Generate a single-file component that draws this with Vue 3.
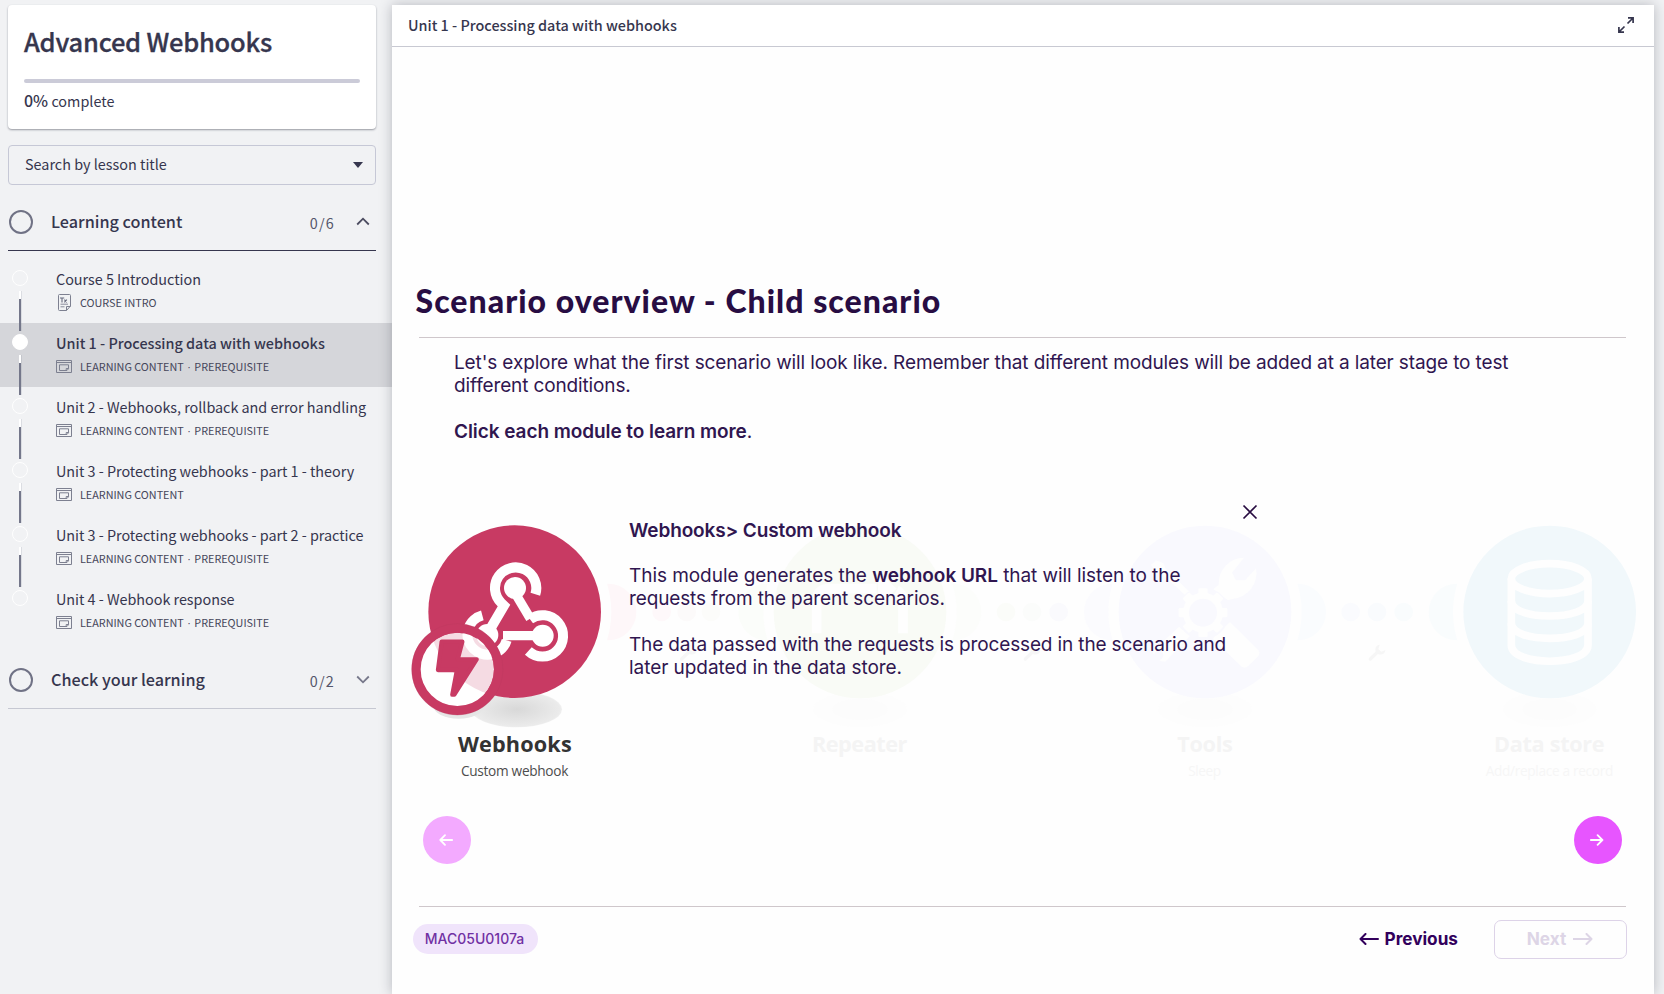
<script setup>
const lessons = [
  { title: 'Course 5 Introduction', kind: 'COURSE INTRO', doc: true },
  { title: 'Unit 1 - Processing data with webhooks', kind: 'LEARNING CONTENT', pre: true, active: true },
  { title: 'Unit 2 - Webhooks, rollback and error handling', kind: 'LEARNING CONTENT', pre: true },
  { title: 'Unit 3 - Protecting webhooks - part 1 - theory', kind: 'LEARNING CONTENT' },
  { title: 'Unit 3 - Protecting webhooks - part 2 - practice', kind: 'LEARNING CONTENT', pre: true },
  { title: 'Unit 4 - Webhook response', kind: 'LEARNING CONTENT', pre: true }
]
const dots = [
  { x: 785, c: '#fef8fa' }, { x: 860, c: '#fcfafa' }, { x: 933, c: '#fcfcfa' },
  { x: 1818, c: '#fbfcf9' }, { x: 1896, c: '#fbfcfb' }, { x: 1976, c: '#fafafd' },
  { x: 2852, c: '#fafbfe' }, { x: 2931, c: '#f9fbfd' }, { x: 3011, c: '#f9fcfd' }
]
const wrenches = [865, 1896, 2931]
const teeth = [0, 45, 90, 135, 180, 225, 270, 315]
</script>

<template>
  <div class="app">
    <aside class="side">
      <section class="card">
        <h2>Advanced Webhooks</h2>
        <div class="bar"></div>
        <p class="done"><b>0%</b> complete</p>
      </section>
      <div class="search">
        <span>Search by lesson title</span>
        <svg width="10" height="6" viewBox="0 0 10 6"><path d="M0 0H10L5 6Z" fill="#36364e" /></svg>
      </div>

      <div class="group open">
        <i class="ring"></i><strong>Learning content</strong><em>0/6</em>
        <svg width="14" height="9" viewBox="0 0 14 9"><path d="M1.2 7.5L7 1.7L12.8 7.5" fill="none" stroke="#4c4c60" stroke-width="1.8" /></svg>
      </div>
      <ul class="lessons">
        <li v-for="(l, i) in lessons" :key="l.title" :class="{ active: l.active }">
          <div class="track"><i class="dot"></i><i v-if="i < 5" class="line"></i></div>
          <div class="text">
            <div class="name">{{ l.title }}</div>
            <div class="meta">
              <svg v-if="l.doc" width="16" height="17" viewBox="0 0 16 17" fill="none" stroke="#7d8090">
                <path d="M2.500 1.500Q2.500 .5 3.500 .5H13.500Q14.500 .5 14.500 1.500V12L10.500 16.500H3.500Q2.500 16.500 2.500 15.500Z M14.500 12.500H10.500V16.500" />
                <path d="M4 4H8.200M6 4V8.400M8.400 5.600L10.800 8.300M10.800 5.600L8.400 8.300" stroke="#666a7e" stroke-width="1.100" />
                <path d="M4.500 10.200H12M4.500 12.800H8.500" stroke-width=".9" />
              </svg>
              <svg v-else width="16" height="13" viewBox="0 0 16 13" fill="none" stroke="#7d8090">
                <path d="M.5 .5H15.500V12.500H.5Z M.5 2.500H15.500" />
                <path d="M3.500 4.800H12.500V8.800L11 10.500H3.500Z M12.500 8.500H10.200V10.500" />
              </svg>
              <span>{{ l.kind }}<template v-if="l.pre"><b class="mid">·</b>PREREQUISITE</template></span>
            </div>
          </div>
        </li>
      </ul>
      <div class="group">
        <i class="ring"></i><strong>Check your learning</strong><em>0/2</em>
        <svg width="14" height="9" viewBox="0 0 14 9"><path d="M1.2 1.5L7 7.3L12.8 1.5" fill="none" stroke="#77788a" stroke-width="1.8" /></svg>
      </div>
    </aside>

    <main class="panel">
      <header class="head">
        <span>Unit 1 - Processing data with webhooks</span>
        <svg width="18" height="18" viewBox="0 0 18 18" fill="none" stroke="#36364e" stroke-width="1.7">
          <path d="M11 1.900H16.100V7M16 2L10.500 7.500M1.900 11V16.100H7M2 16L7.500 10.500" />
        </svg>
      </header>
      <div class="stage">
        <h1>Scenario overview - Child scenario</h1>
        <hr>
        <div class="intro">
          <p class="l1">Let's explore what the first scenario will look like. Remember that different modules will be added at a later stage to test</p>
          <p class="l2">different conditions.</p>
          <p class="l3"><b>Click each module to learn more</b>.</p>
        </div>

        <div class="scene">
          <svg class="flow" width="1254" height="300" viewBox="0 0 3762 900">
            <defs>
              <radialGradient id="shade"><stop offset="0" stop-color="#d8d8d8" /><stop offset=".95" stop-color="#ebebeb" /><stop offset="1" stop-color="#f0f0f0" /></radialGradient>
              <g id="wrench">
                <path d="M-20 19L4 -4" stroke="#f6f6f6" stroke-width="10" stroke-linecap="round" />
                <path d="M8 -24A15 15 0 1 0 25 -8L13 -3L4 -10Z" fill="#f6f6f6" />
              </g>
            </defs>

            <!-- connectors -->
            <circle cx="624" cy="336" r="85" fill="#fef7f9" />
            <circle cx="1100" cy="336" r="85" fill="#fbfdfa" />
            <circle cx="1659" cy="336" r="85" fill="#fcfdfb" />
            <circle cx="2137" cy="336" r="85" fill="#fbfbfe" />
            <circle cx="2693" cy="336" r="85" fill="#fafcfe" />
            <circle cx="3171" cy="336" r="85" fill="#f9fcfd" />
            <circle cx="344" cy="336" r="290" fill="#fefefe" />
            <circle cx="1380" cy="336" r="290" fill="#fefefe" />
            <circle cx="2415" cy="336" r="290" fill="#fefefe" />
            <circle cx="3449" cy="336" r="290" fill="#fefefe" />
            <circle v-for="d in dots" :key="d.x" :cx="d.x" cy="336" r="28" :fill="d.c" />
            <use v-for="x in wrenches" :key="x" href="#wrench" :x="x" y="458" />

            <!-- webhooks -->
            <ellipse cx="350" cy="628" rx="136" ry="54" fill="url(#shade)" />
            <ellipse cx="176" cy="618" rx="76" ry="38" fill="#e6e6e6" />
            <circle cx="344" cy="335" r="259" fill="#c83a63" />
            <g fill="none" stroke="#fff" stroke-width="30">
              <path d="M406 283A62 62 0 1 0 304 309L312 317L270 388" />
              <path d="M348 284L391 356" stroke-width="28" />
              <path d="M390 358A62 62 0 1 1 385 453" />
              <path d="M428 407H309" stroke-width="28" />
              <path d="M320 421A60 60 0 1 1 247 346" />
            </g>
            <circle cx="345" cy="264" r="33" fill="#fff" />
            <circle cx="428" cy="407" r="33" fill="#fff" />
            <circle cx="262" cy="405" r="33" fill="#fff" />
            <circle cx="172" cy="508" r="110" fill="#fff" fill-opacity=".82" />
            <path d="M62 508A110 110 0 0 1 86 439A259 259 0 0 0 244 591A110 110 0 0 1 62 508Z" fill="#fff" />
            <circle cx="172" cy="508" r="123.500" fill="none" stroke="#c83a63" stroke-width="27" />
            <circle cx="172" cy="508" r="137" fill="none" stroke="#b83a5f" stroke-width="1.500" stroke-opacity=".6" />
            <path d="M125 425H187L173 478H230L163 584H157L171 510H114Z" fill="#c83a63" stroke="#c83a63" stroke-width="13" stroke-linejoin="round" />
            <text class="lab" x="174" y="755" textLength="341" fill="#333">Webhooks</text>
            <text class="sub" x="183" y="828" textLength="322" fill="#4d4d4d">Custom webhook</text>

            <!-- repeater -->
            <ellipse cx="1380" cy="628" rx="140" ry="53" fill="#fdfdfd" />
            <ellipse cx="1380" cy="628" rx="82" ry="32" fill="#fcfcfc" />
            <circle cx="1380" cy="336" r="259" fill="#f9fbf6" />
            <path d="M1250 400V300Q1250 266 1290 266H1430M1509 400V300Q1509 280 1490 270" fill="none" stroke="#fefefe" stroke-width="29" />
            <path d="M1434 215L1490 266L1434 317Z" fill="#fefefe" />
            <text class="lab" x="1236" y="755" textLength="286" fill="#f4f4f4">Repeater</text>

            <!-- tools -->
            <ellipse cx="2415" cy="628" rx="140" ry="53" fill="#fdfdfd" />
            <ellipse cx="2415" cy="628" rx="82" ry="32" fill="#fcfcfc" />
            <circle cx="2415" cy="336" r="259" fill="#f9f9fe" />
            <g fill="#fefefe">
              <path d="M2268 181L2290 190L2298 208L2372 278L2360 290L2284 220L2266 214L2253 195Z" />
              <path d="M2490 366L2572 447Q2584 458 2573 470L2545 498Q2532 508 2520 496L2440 418Q2444 400 2460 394Z" />
              <path d="M2532 173A77 77 0 0 0 2456 254L2440 268L2484 301L2500 296A77 77 0 0 0 2568 205L2535 241H2508L2496 218Z" />
              <path d="M2337 380L2259 452A36 36 0 0 0 2296 485L2370 408Z" />
            </g>
            <circle cx="2276" cy="466" r="14" fill="#f9f9fe" />
            <circle cx="2409" cy="340" r="78" fill="#f9f9fe" />
            <g transform="translate(2409 338)">
              <rect v-for="t in teeth" :key="t" x="-14" y="-73" width="28" height="30" rx="4" fill="#fefefe" :transform="`rotate(${t})`" />
              <circle r="51" fill="none" stroke="#fefefe" stroke-width="18" />
            </g>
            <text class="lab" x="2332" y="755" textLength="166" fill="#f4f4f4">Tools</text>
            <text class="sub" x="2365" y="828" textLength="98" fill="#f6f6f6">Sleep</text>

            <!-- data store -->
            <ellipse cx="3449" cy="628" rx="140" ry="53" fill="#fdfdfd" />
            <ellipse cx="3449" cy="628" rx="82" ry="32" fill="#fcfcfc" />
            <circle cx="3449" cy="336" r="259" fill="#f1f8fb" />
            <g fill="none" stroke="#fefefe" stroke-width="23">
              <ellipse cx="3449" cy="236" rx="115" ry="45" />
              <path d="M3334 236V435C3334 500 3564 500 3564 435V236" />
              <path d="M3334 303C3334 363 3564 363 3564 303M3334 370C3334 430 3564 430 3564 370" />
            </g>
            <text class="lab" x="3282" y="755" textLength="332" fill="#f4f4f4">Data store</text>
            <text class="sub" x="3257" y="828" textLength="383" fill="#f6f6f6">Add/replace a record</text>
          </svg>

          <div class="pop">
            <p class="p1"><b>Webhooks&gt; Custom webhook</b></p>
            <p class="p2">This module generates the <b>webhook URL</b> that will listen to the</p>
            <p class="p3">requests from the parent scenarios.</p>
            <p class="p4">The data passed with the requests is processed in the scenario and</p>
            <p class="p5">later updated in the data store.</p>
          </div>
          <svg class="close" width="16" height="16" viewBox="0 0 16 16"><path d="M1.500 1.500L14.500 14.500M14.500 1.500L1.500 14.500" stroke="#270b40" stroke-width="1.700" /></svg>
        </div>

        <div class="nav">
          <button class="round off"><svg width="14" height="12" viewBox="0 0 14 12"><path d="M13.200 6H1.500M6 1.200L1.300 6L6 10.800" /></svg></button>
          <button class="round"><svg width="14" height="12" viewBox="0 0 14 12"><path d="M.8 6H12.500M7.600 1.200L12.400 6L7.600 10.800" /></svg></button>
        </div>
        <hr class="foot-rule">
        <footer>
          <span class="code">MAC05U0107a</span>
          <a class="prev"><svg width="20" height="12" viewBox="0 0 20 12"><path d="M19 6H1.500M6.500 1L1.500 6L6.500 11" /></svg><span>Previous</span></a>
          <a class="next"><span>Next</span><svg width="20" height="12" viewBox="0 0 20 12"><path d="M.5 6H18.500M13.500 1L18.500 6L13.500 11" /></svg></a>
        </footer>
      </div>
    </main>
  </div>
</template>

<style>
body { background: #f1f2f4; overflow: hidden; }
</style>

<style scoped>
.app { display: flex; width: 1664px; height: 994px; overflow: hidden; background: #f1f2f4; color: #36364e; font-family: "Noto Sans CJK SC", "Noto Sans", sans-serif; box-sizing: border-box; padding-top: 5px; }
.app *, .app { box-sizing: border-box; }
p, h1, h2, ul { margin: 0; padding: 0; font-weight: 400; white-space: nowrap; }
.side { width: 392px; flex: none; }
.card { margin: 0 16px 0 8px; height: 124px; background: #fff; border-radius: 4px; padding: 0 16px; box-shadow: 0 1px 2px rgba(40, 44, 60, .45); }
.card h2 { font-size: 25.500px; font-weight: 500; line-height: 40px; padding-top: 16px; height: 74px; letter-spacing: -.24px; -webkit-text-stroke: .3px #36364e; }
.bar { height: 4px; border-radius: 2px; background: #cbcbd8; }
.done { font-size: 14.400px; line-height: 22px; padding-top: 6px; }
.done b { font-weight: 500; font-size: 16px; }
.search { margin: 16px 16px 0 8px; height: 40px; border: 1px solid #c6c8d6; border-radius: 4px; padding: 0 12px 4px 16px; display: flex; align-items: center; justify-content: space-between; font-size: 14.400px; }
.search svg { margin-top: 4px; }
.group { margin: 0 16px 0 8px; height: 57px; border-bottom: 1px solid #c6c8d2; display: flex; align-items: center; }
.group.open { margin-top: 9px; border-bottom-color: #36364e; }
.ring { width: 24px; height: 24px; border: 2px solid #707285; border-radius: 50%; margin: -1px 0 0 1px; }
.group strong { font-size: 16.200px; font-weight: 500; margin: -2px 0 0 18px; flex: 1; }
.group em { font-style: normal; font-size: 14.400px; letter-spacing: 1.200px; color: #55566a; margin: 0 21px 0 0; }
.group svg { margin: -1px 6px 0 0; }
.lessons { list-style: none; padding: 8px 0 9px; }
.lessons li { display: flex; height: 64px; }
.lessons li.active { background: #d5d6da; }
.track { width: 56px; padding: 11px 0 0 12px; display: flex; flex-direction: column; height: 72px; }
.dot { width: 16px; height: 16px; border-radius: 50%; border: 1px solid #fff; flex: none; }
.active .dot { background: #fff; }
.line { width: 2px; height: 40px; margin: 5px 0 0 7px; background: linear-gradient(#fff 0 8px, #74778a 8px); flex: none; box-shadow: .5px 0 0 rgba(116, 119, 138, .35); z-index: 1; }
.name { font-size: 14.400px; line-height: 22px; padding-top: 9px; letter-spacing: -.03px; }
.active .name { font-weight: 500; letter-spacing: 0; }
.meta { display: flex; align-items: center; height: 18px; margin-top: 3px; font-size: 10.800px; line-height: 18px; color: #45465a; }
.meta svg { margin: 0 8px 0 0; }
.mid { font-family: "Liberation Sans", sans-serif; font-weight: 400; display: inline-block; width: 10.600px; text-align: center; line-height: 10px; }
.panel { width: 1262px; height: 989px; background: #fff; box-shadow: 0 0 12px rgba(30, 34, 50, .28); }
.head { height: 42px; border-bottom: 1px solid #c8c9d2; display: flex; align-items: center; justify-content: space-between; padding: 0 19px 2px 16px; font-size: 14.400px; font-weight: 500; }
.stage { background: #fefefe; height: 947px; padding: 232px 0 0; font-family: Inter, sans-serif; color: #301650; }
h1 { font-family: Lato, sans-serif; font-size: 32px; font-weight: 900; line-height: 44px; height: 44px; padding-left: 23.500px; color: #280d43; letter-spacing: 1.030px; }
hr { border: 0; height: 1px; background: #cfc7cb; width: 1207px; margin: 14px 0 0 27px; }
.intro { padding: 13px 0 0 62px; font-size: 19px; line-height: 23px; }
.intro .l1 { letter-spacing: -.125px; }
.intro .l2 { letter-spacing: -.13px; }
.intro .l3 { margin-top: 23px; letter-spacing: -.07px; }
.intro b, .pop b { font-weight: 600; }
.scene { position: relative; height: 300px; margin: 57px 0 0 8px; }
.flow { display: block; }
.lab { font: 700 65px "Open Sans", sans-serif; }
.sub { font: 400 41px "Open Sans", sans-serif; }
.pop { position: absolute; left: 229px; top: 19px; font-size: 19px; line-height: 23px; }
.pop .p1 { letter-spacing: -.13px; }
.pop .p2 { margin-top: 22px; letter-spacing: -.055px; }
.pop .p3 { letter-spacing: -.13px; }
.pop .p4 { margin-top: 23px; letter-spacing: -.14px; }
.pop .p5 { letter-spacing: -.05px; }
.close { position: absolute; left: 842px; top: 4px; }
.nav { display: flex; justify-content: space-between; padding: 16.400px 32px 0 31px; }
.round { width: 48px; height: 48px; border: 0; border-radius: 50%; background: #e755ff; display: grid; place-items: center; padding: 0; }
.round.off { background: #f3aaff; }
.round svg { fill: none; stroke: #fff; stroke-width: 1.800; stroke-linecap: round; stroke-linejoin: round; margin: -1px 2px 0 0; }
.foot-rule { margin-top: 41.600px; }
footer { display: flex; align-items: center; padding: 13px 27px 0 21px; }
.code { width: 125px; height: 30px; border-radius: 15px; background: #f0e4fb; color: #7030a3; font-size: 14px; font-weight: 500; line-height: 30px; text-align: center; padding-right: 2px; margin-top: -1px; }
.prev { display: flex; align-items: center; gap: 6px; font-weight: 700; font-size: 17.200px; color: #32005c; margin: 0 36px 0 auto; padding-bottom: 1px; }
.next { width: 133px; height: 39px; border: 1px solid #ddd3e8; border-radius: 7px; display: flex; align-items: center; justify-content: center; gap: 7px; font-weight: 700; font-size: 17.200px; color: #ddd5e6; padding: 0 1px 1px 0; }
.prev svg, .next svg { fill: none; stroke: currentColor; stroke-width: 2; stroke-linecap: round; stroke-linejoin: round; }
</style>
